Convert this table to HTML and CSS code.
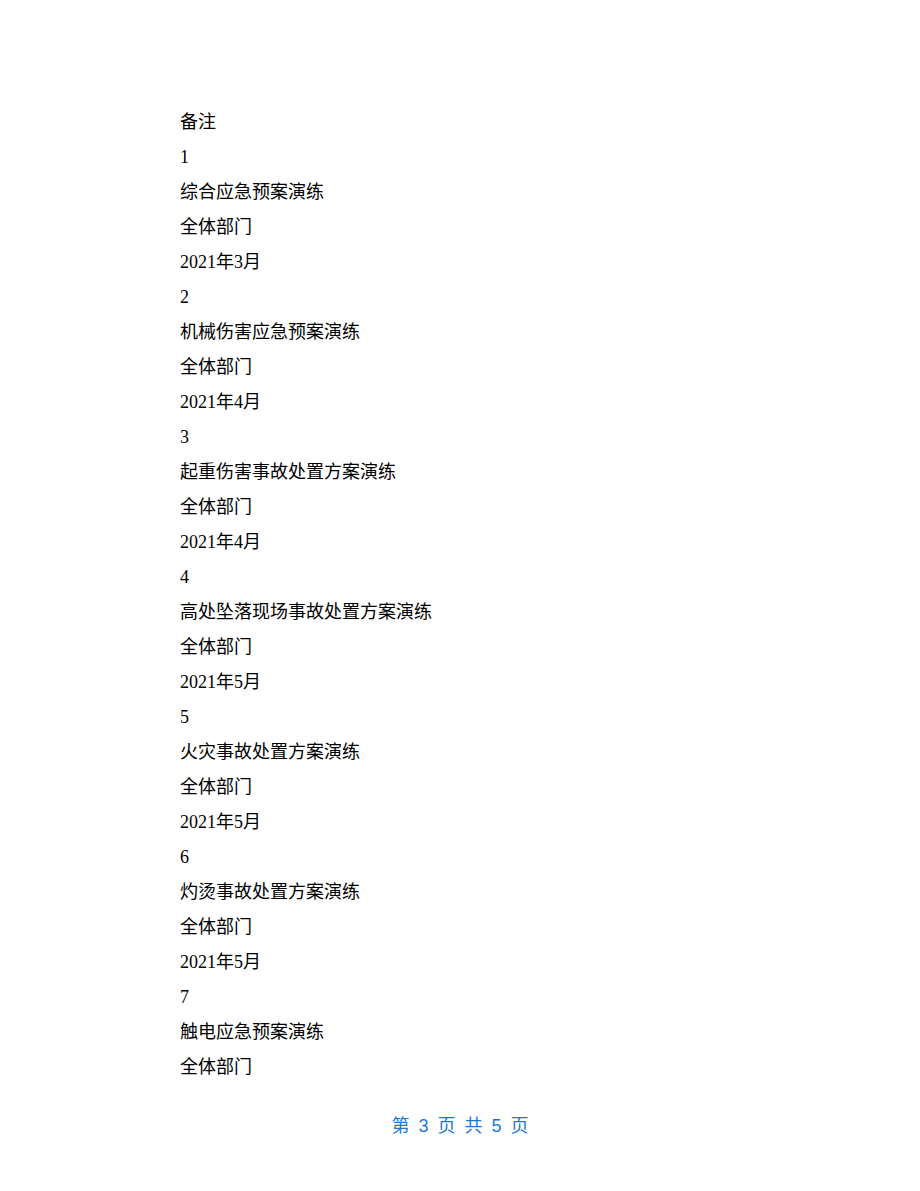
FILE: index.html
```html
<!DOCTYPE html>
<html lang="zh-CN">
<head>
<meta charset="utf-8">
<link rel="stylesheet" href="styles.css">
</head>
<body>
<div class="page">
  <div class="content">
    <p>备注</p>
    <p>1</p>
    <p>综合应急预案演练</p>
    <p>全体部门</p>
    <p>2021年3月</p>
    <p>2</p>
    <p>机械伤害应急预案演练</p>
    <p>全体部门</p>
    <p>2021年4月</p>
    <p>3</p>
    <p>起重伤害事故处置方案演练</p>
    <p>全体部门</p>
    <p>2021年4月</p>
    <p>4</p>
    <p>高处坠落现场事故处置方案演练</p>
    <p>全体部门</p>
    <p>2021年5月</p>
    <p>5</p>
    <p>火灾事故处置方案演练</p>
    <p>全体部门</p>
    <p>2021年5月</p>
    <p>6</p>
    <p>灼烫事故处置方案演练</p>
    <p>全体部门</p>
    <p>2021年5月</p>
    <p>7</p>
    <p>触电应急预案演练</p>
    <p>全体部门</p>
  </div>
  <div class="footer">第 3 页 共 5 页</div>
</div>
</body>
</html>
```
FILE: styles.css
```css
html, body {
  margin: 0;
  padding: 0;
  background: #ffffff;
}
.page {
  width: 920px;
  height: 1191px;
  position: relative;
  font-family: "Liberation Serif", "Noto Sans CJK SC", serif;
  color: #000000;
  font-size: 18px;
}
.content {
  padding-top: 105px;
  padding-left: 180px;
}
.content p {
  margin: 0;
  line-height: 35px;
  height: 35px;
}
.footer {
  position: absolute;
  left: 0;
  right: 0;
  top: 1109px;
  line-height: 35px;
  text-align: center;
  color: #1a78d4;
  font-size: 18px;
  font-family: "Liberation Sans", "Noto Sans CJK SC", sans-serif;
  word-spacing: 4px;
}
```
